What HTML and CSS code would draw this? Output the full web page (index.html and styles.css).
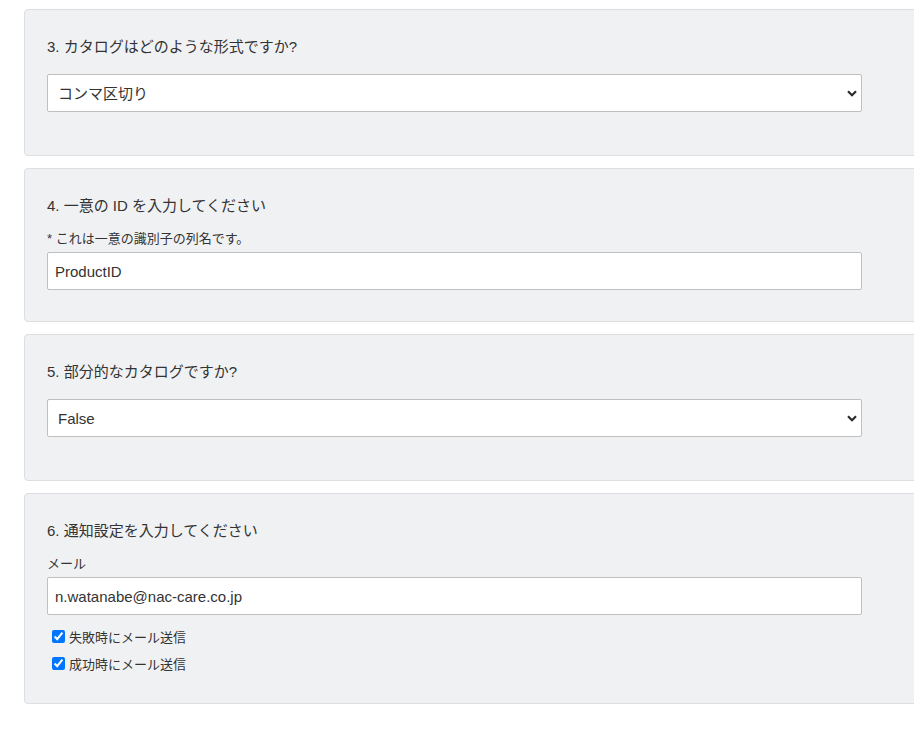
FILE: index.html
```html
<!DOCTYPE html>
<html lang="ja">
<head>
<meta charset="utf-8">
<title>カタログ設定</title>
<link rel="stylesheet" href="styles.css">
</head>
<body>
<main class="form">
  <section class="card">
    <h3 class="q-title">3. カタログはどのような形式ですか?</h3>
    <div class="select-wrap">
      <select class="control">
        <option>コンマ区切り</option>
      </select>
      <svg class="chevron" width="10" height="7" viewBox="0 0 10 7"><path d="M1 1.2 L5 5.2 L9 1.2" fill="none" stroke="#2b2b2b" stroke-width="2.2"/></svg>
    </div>
  </section>

  <section class="card">
    <h3 class="q-title tight">4. 一意の ID を入力してください</h3>
    <p class="hint">* これは一意の識別子の列名です。</p>
    <input class="control text" type="text" value="ProductID">
  </section>

  <section class="card">
    <h3 class="q-title">5. 部分的なカタログですか?</h3>
    <div class="select-wrap">
      <select class="control">
        <option>False</option>
      </select>
      <svg class="chevron" width="10" height="7" viewBox="0 0 10 7"><path d="M1 1.2 L5 5.2 L9 1.2" fill="none" stroke="#2b2b2b" stroke-width="2.2"/></svg>
    </div>
  </section>

  <section class="card">
    <h3 class="q-title tight">6. 通知設定を入力してください</h3>
    <label class="hint field-label">メール</label>
    <input class="control text" type="text" value="n.watanabe@nac-care.co.jp">
    <div class="checks">
      <label class="check"><input type="checkbox" checked><span>失敗時にメール送信</span></label>
      <label class="check"><input type="checkbox" checked><span>成功時にメール送信</span></label>
    </div>
  </section>
</main>
</body>
</html>
```

FILE: styles.css
```css
html, body {
  margin: 0;
  overflow: hidden;
  background: #ffffff;
}

body {
  font-family: "Liberation Sans", "Noto Sans CJK JP", sans-serif;
  color: #333333;
}

.form {
  display: flex;
  flex-direction: column;
  gap: 12px;
  padding: 9px 0 0 24px;
}

.card {
  width: 920px;
  box-sizing: border-box;
  background: #f0f1f3;
  border: 1px solid #dcdee1;
  border-radius: 4px;
  padding: 26px 22px 26px 22px;
  display: flex;
  flex-direction: column;
  align-items: flex-start;
}

.q-title {
  margin: 0 0 16px 0;
  font-size: 15px;
  font-weight: normal;
  line-height: 22px;
  color: #333333;
}

.q-title.tight {
  margin-bottom: 12px;
}

.hint {
  margin: 0 0 3px 0;
  font-size: 13px;
  line-height: 20px;
  color: #333333;
}

.field-label {
  margin-bottom: 3px;
}

.select-wrap {
  position: relative;
  margin-bottom: 17px;
}

.control {
  width: 815px;
  height: 38px;
  box-sizing: border-box;
  border: 1px solid #bfbfbf;
  border-radius: 2px;
  background: #ffffff;
  font-family: "Liberation Sans", "Noto Sans CJK JP", sans-serif;
  font-size: 15px;
  color: #333333;
  outline: none;
  margin: 0;
}

select.control {
  appearance: none;
  -webkit-appearance: none;
  padding: 0 30px 0 10px;
}

.control.text {
  padding: 0 7px;
  margin-bottom: 5px;
}

.chevron {
  position: absolute;
  right: 5px;
  top: 16px;
  pointer-events: none;
}

.checks {
  display: flex;
  flex-direction: column;
  margin-top: 3px;
}

.check {
  display: flex;
  align-items: center;
  height: 27px;
  font-size: 13px;
  color: #333333;
}

.check input {
  width: 13px;
  height: 13px;
  margin: 0 4px 0 5px;
  accent-color: #0075ff;
}
```
